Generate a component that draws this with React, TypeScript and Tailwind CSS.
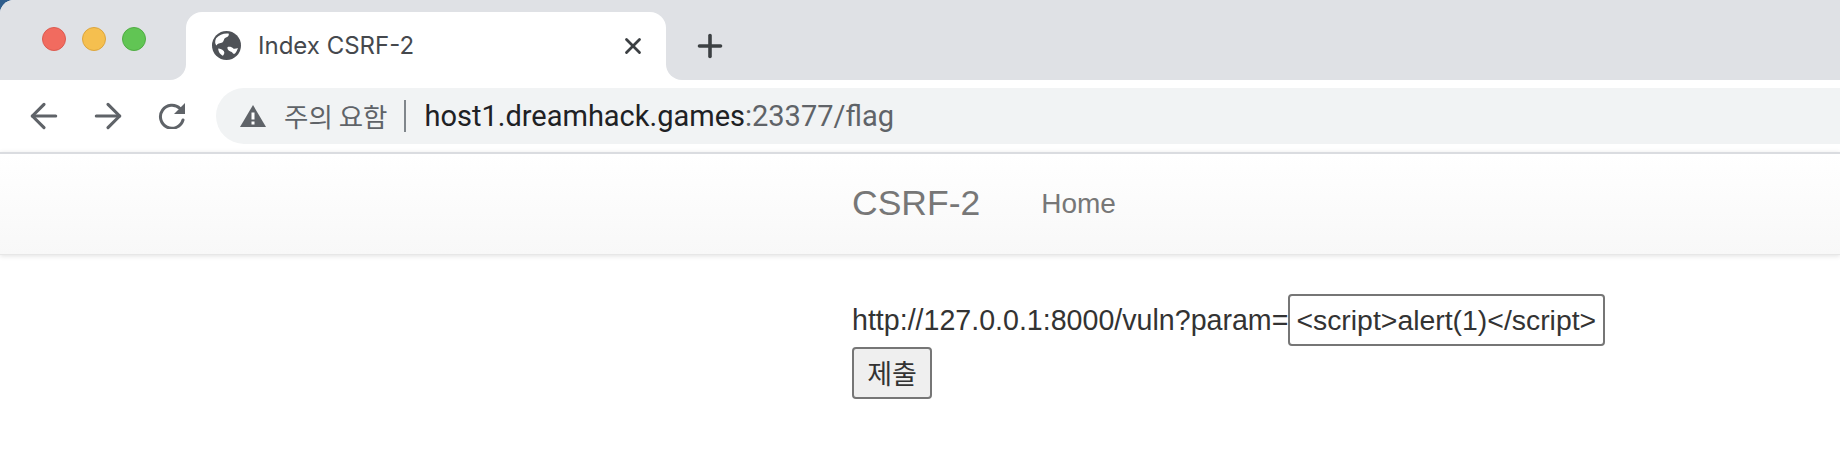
import { ArrowLeft, ArrowRight, Plus, X } from 'lucide-react'

function GlobeIcon() {
  return (
    <svg viewBox="0 0 28 28" className="w-[29px] h-[29px] shrink-0">
      <circle cx="14" cy="14" r="14" fill="#4f5257" />
      <path d="M4 7c3-3 7-5 12-4.500 1 2-1 3.500-3 4-2 1-1 3-3 4.500-2 1-5 .5-5.500 3C3 13 2.500 10 4 7z" fill="#fff" />
      <path d="M15 15.500c2-.5 4.500 0 5.500 1.500 1.500.5 3 0 4.500-.5-.5 2-1.500 4-3 5.500-2 .5-2-1.500-3.500-2-2-.5-4-2-3.500-4.500z" fill="#fff" />
      <path d="M6 17c2 0 4 1 5.500 2.500 1 1.500 0 3-1 4.500C8 23 6 20 6 17z" fill="#fff" />
    </svg>
  )
}

function ReloadIcon() {
  return (
    <svg viewBox="0 0 28 26" className="w-[28px] h-[26px] shrink-0">
      <path d="M25 17a11.500 11.500 0 1 1-3-11.500" fill="none" stroke="#5f6368" strokeWidth="3" strokeLinecap="round" />
      <path d="M27 0v11H16z" fill="#5f6368" />
    </svg>
  )
}

function WarningIcon() {
  return (
    <svg viewBox="0 0 26 22" className="w-[26px] h-[22px] shrink-0">
      <path d="M13 0l13 22H0z" fill="#5f6368" />
      <rect x="11.500" y="7.500" width="3" height="7" fill="#fff" />
      <rect x="11.500" y="16.500" width="3" height="3" fill="#fff" />
    </svg>
  )
}

export default function App() {
  return (
    <div className="w-[1840px] h-[452px] overflow-hidden bg-[#2f5d8c] font-['Liberation_Sans',sans-serif]">
      {/* tab strip */}
      <div className="flex h-20 bg-white rounded-tl-[14px] overflow-hidden">
        <div className="w-[186px] bg-[#dfe1e5] rounded-br-[16px] flex items-center gap-4 pl-[42px] pb-[3px]">
          <span className="w-6 h-6 rounded-full bg-[#f16b5f] border border-[#dc5a50]" />
          <span className="w-6 h-6 rounded-full bg-[#f5bf4f] border border-[#dca53d]" />
          <span className="w-6 h-6 rounded-full bg-[#61c554] border border-[#50ad43]" />
        </div>
        <div className="w-[480px] bg-[#dfe1e5] pt-3">
          <div className="h-[68px] bg-white rounded-t-[16px] flex items-center pl-[26px] pr-[20px] pb-[1px]">
            <GlobeIcon />
            <span className="ml-[17px] flex-1 text-[24px] text-[#45484d] font-['Inter',sans-serif]">Index CSRF-2</span>
            <X className="w-[26px] h-[26px] text-[#3c4043]" strokeWidth={2.6} />
          </div>
        </div>
        <div className="flex-1 bg-[#dfe1e5] rounded-bl-[16px] flex items-center pl-[26px] pt-[12px]">
          <Plus className="w-9 h-9 text-[#3c4043]" strokeWidth={2.4} />
        </div>
      </div>

      {/* toolbar */}
      <div className="h-[72px] bg-white flex items-center pl-6">
        <ArrowLeft className="w-10 h-10 text-[#5f6368]" strokeWidth={1.9} />
        <ArrowRight className="w-10 h-10 text-[#5f6368] ml-6" strokeWidth={1.9} />
        <div className="ml-[30px]"><ReloadIcon /></div>
        <div className="ml-[30px] flex-1 h-14 bg-[#f1f3f4] rounded-l-[28px] flex items-center pl-6">
          <WarningIcon />
          <span className="ml-[18px] text-[26.500px] text-[#5f6368] font-['Noto_Sans_CJK_KR',sans-serif]">주의 요함</span>
          <span className="ml-[17px] w-[2px] h-8 bg-[#80868b]" />
          <span className="ml-[18px] pt-[2px] text-[29px] text-[#202124] font-['Roboto',sans-serif]">
            host1.dreamhack.games<span className="text-[#5f6368]">:23377/flag</span>
          </span>
        </div>
      </div>

      {/* page */}
      <div className="h-[300px] bg-white">
        <div className="h-[103px] border-t-2 border-[#dadce0] bg-gradient-to-b from-white to-[#f8f8f8] shadow-[0_1px_5px_rgba(0,0,0,0.12)] border-b border-b-[#e7e7e7] flex items-center pl-[852px] text-[#777]">
          <span className="text-[35.500px]">CSRF-2</span>
          <span className="ml-[61px] text-[28px]">Home</span>
        </div>
        <div className="pl-[852px] pt-[39px] text-[28.600px] text-[#333]">
          <div className="flex items-center">
            <span>http://127.0.0.1:8000/vuln?param=</span>
            <input
              readOnly
              value="<script>alert(1)</script>"
              className="w-[317px] h-[52px] px-[6px] border-2 border-[#767676] rounded-[4px] bg-white text-[28.400px] text-[#333] outline-none"
            />
          </div>
          <button className="mt-px block w-[80px] h-[52px] border-2 border-[#767676] rounded-[4px] bg-[#efefef] text-[27px] text-[#333] font-['Noto_Sans_CJK_KR',sans-serif]">
            제출
          </button>
        </div>
      </div>
    </div>
  )
}
